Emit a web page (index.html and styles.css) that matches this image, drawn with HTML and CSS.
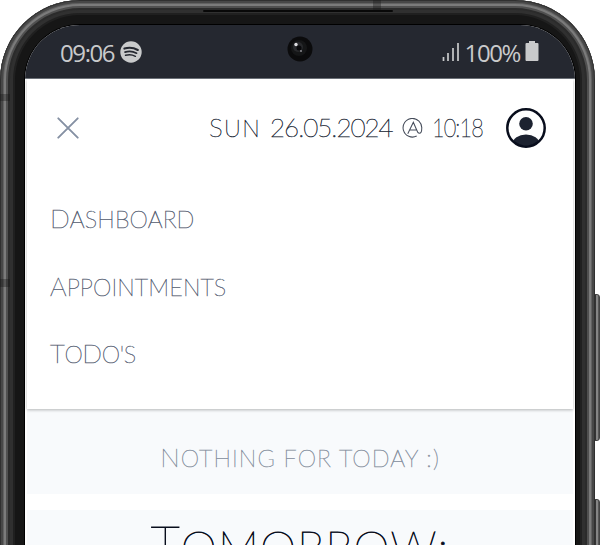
FILE: index.html
```html
<!DOCTYPE html>
<html lang="en">
<head>
<meta charset="utf-8">
<title>Planner</title>
<link rel="stylesheet" href="styles.css">
</head>
<body>
<i class="side-key volume"></i>
<i class="side-key power"></i>
<div class="phone">
  <i class="antenna top"></i><i class="antenna upper"></i><i class="antenna lower"></i><i class="speaker"></i>
  <div class="screen">
    <div class="status">
      <div class="status-group">
        <span class="clock">09:06</span>
        <svg class="music" viewBox="0 0 22 22"><circle cx="11" cy="11" r="10.7" fill="#c9cacb"/><g fill="none" stroke="#252830" stroke-linecap="round"><path d="M4.4 7.6Q11.5 5.4 17.8 9" stroke-width="2.1"/><path d="M5 11.1Q11 9.2 16.6 12.2" stroke-width="1.7"/><path d="M5.5 14.3Q11 12.8 15.4 15.3" stroke-width="1.4"/></g></svg>
      </div>
      <svg class="camera" viewBox="0 0 26 26"><circle cx="13" cy="13" r="12.5" fill="#0b0b0c"/><circle cx="12" cy="12" r="8" fill="#151617"/><circle cx="11" cy="11" r="5" fill="#28292c"/><circle cx="12" cy="12" r="2.5" fill="#08080a"/><circle cx="9" cy="8.5" r="1.7" fill="#dcdcdf"/><circle cx="14" cy="15" r="1" fill="#8b8b91"/></svg>
      <div class="status-group">
        <svg class="signal" viewBox="0 0 18 20"><path d="M1.5 15v4M6 11v8M11 6v13M16 1v18" stroke="#c9cacb" stroke-width="1.7"/></svg>
        <span class="percent">100%</span>
        <svg class="battery" viewBox="0 0 14 20"><path d="M4 0h6v2h2.5q1 0 1 1v16q0 1-1 1h-11q-1 0-1-1V3q0-1 1-1H4z" fill="#c9cacb"/></svg>
      </div>
    </div>
    <header class="menu">
      <div class="bar">
        <svg class="close" viewBox="0 0 22 22"><path d="M1.3 1.3 20.7 20.7M20.7 1.3 1.3 20.7" stroke="#8590a3" stroke-width="1.9" stroke-linecap="round"/></svg>
        <div class="date"><span class="d-day">S<small>UN</small></span><span class="d-date">26.05.2024</span><svg class="at" viewBox="0 0 20 20" fill="none" stroke="#454c5a"><path d="M14 17.2A8.9 8.9 0 1 1 18.8 10c0 3-1 4.6-2.3 4.6-1.5 0-1.8-1-2.4-3L10.8 4 5.5 15M7.3 11.5h6.4"/></svg><span class="d-time">10:18</span></div>
        <svg class="avatar" viewBox="0 0 40 40"><defs><clipPath id="face"><circle cx="20" cy="20" r="18"/></clipPath></defs><ellipse cx="20" cy="35.5" rx="13.5" ry="9" fill="#1c2230" clip-path="url(#face)"/><circle cx="20" cy="15.8" r="6.8" fill="#1c2230"/><circle cx="20" cy="20" r="18.7" fill="none" stroke="#080d1c" stroke-width="2.5"/></svg>
      </div>
      <nav class="links">
        <a>D<small>ASHBOARD</small></a>
        <a class="l-app">A<small>PPOINTMENTS</small></a>
        <a class="l-todo">T<small>O</small>D<small>O'S</small></a>
      </nav>
    </header>
    <section class="today"><span>N<small>OTHING FOR TODAY :)</small></span></section>
    <section class="tomorrow"><h1>T<small>OMORROW:</small></h1></section>
  </div>
</div>
</body>
</html>
```
FILE: styles.css
```css
* { box-sizing: border-box; }
html { overflow: hidden; }
body { margin: 0; width: 600px; height: 545px; overflow: hidden; background: #fff; position: relative; }
svg { display: block; flex: none; }
small { font-size: .9em; }
.phone {
  position: relative; width: 595px; height: 545px; overflow: hidden; padding: 25px 20px 0 25px;
  border-radius: 80px 80px 0 0; background: #161616;
}
/* metal rim, drawn past the lower edge so that it stays open there */
.phone::before {
  content: ""; position: absolute; inset: 0 0 -40px; border-radius: 80px 80px 0 0;
  box-shadow: inset 0 0 0 1px #303030, inset 0 0 0 3px #474747, inset 0 0 0 4px #626262, inset 0 0 0 6px #7b7b7b, inset 0 0 0 8px #505050, inset 0 0 0 10px #2b2b2b, inset 0 0 0 13px #303030, inset 0 0 0 15px #202020;
}
.screen { position: relative; width: 550px; height: 520px; background: #fff; border-radius: 55px 55px 0 0; box-shadow: 0 0 0 1px #000; overflow: hidden; }
.side-key { position: absolute; left: 592px; width: 8px; border-radius: 3px; background: linear-gradient(90deg, #333 0 50%, #858585 50% 85%, #555 85%); border: 1px solid #444; }
.volume { top: 294px; height: 147px; }
.power { top: 499px; height: 147px; }
.antenna { position: absolute; z-index: 1; background: rgba(20, 20, 20, .35); }
.upper { left: 0; top: 94px; width: 10px; height: 7px; }
.lower { left: 0; top: 279px; width: 10px; height: 8px; }
.top { left: 373px; top: 0; width: 8px; height: 10px; }
.speaker { position: absolute; z-index: 1; left: 203px; top: 10px; width: 190px; height: 2px; border-radius: 2px; background: #080808; }
.status { height: 54px; padding: 1px 36px 0 35px; background: #252830; border-bottom: 1px solid #71767d; display: grid; grid-template-columns: 1fr 26px 1fr; align-items: center; font: 24px "Open Sans", sans-serif; color: #c9cacb; }
.status-group { display: flex; align-items: center; gap: 6px; }
.status-group:last-child { justify-content: flex-end; gap: 5px; }
.clock, .percent { line-height: 32px; padding-top: 2px; letter-spacing: -1.4px; }
.music { width: 22px; height: 22px; }
.signal { width: 18px; height: 20px; }
.battery { width: 14px; height: 20px; margin-top: -2px; }
.camera { width: 26px; height: 26px; margin-top: -6px; }
.menu { position: relative; height: 330px; margin: 0 2px; background: #fff; box-shadow: 0 1px 3px rgba(0, 0, 0, .28); }
.bar { height: 98px; padding: 0 27px 0 30px; display: flex; align-items: center; }
.close { width: 22px; height: 22px; }
.date { display: flex; align-items: center; margin-left: auto; font: 100 26px/30px Lato, sans-serif; color: #242b39; -webkit-text-stroke: .5px; }
.date span { padding-bottom: 2px; white-space: nowrap; }
.d-day { width: 61px; letter-spacing: 1.3px; }
.d-date { width: 132px; letter-spacing: -1px; }
.at { width: 21px; height: 21px; margin-right: 9px; }
.d-time { width: 51px; letter-spacing: -1px; transform: scaleX(.83); transform-origin: left; }
.avatar { width: 40px; height: 40px; margin-left: 23px; }
.links { display: flex; flex-direction: column; padding: 8px 0 0 23px; font: 100 26px/67px Lato, sans-serif; color: #5a6476; -webkit-text-stroke: .5px; letter-spacing: .1px; }
.l-app { letter-spacing: .1px; }
.l-todo { letter-spacing: -.4px; margin-top: -1px; }
.today { height: 85px; margin: 0 2px; background: #f8fafc; display: flex; align-items: center; justify-content: center; padding-top: 11px; font: 100 26px/32px Lato, sans-serif; color: #8791a0; -webkit-text-stroke: .5px; letter-spacing: 1.1px; }
.tomorrow { height: 35px; overflow: hidden; margin: 16px 2px 0; background: #f8fafc; text-align: center; }
h1 { margin: 0; padding-top: 5px; font: 100 51px/60px Lato, sans-serif; color: #080d1c; -webkit-text-stroke: .8px; letter-spacing: 1.1px; }
```
